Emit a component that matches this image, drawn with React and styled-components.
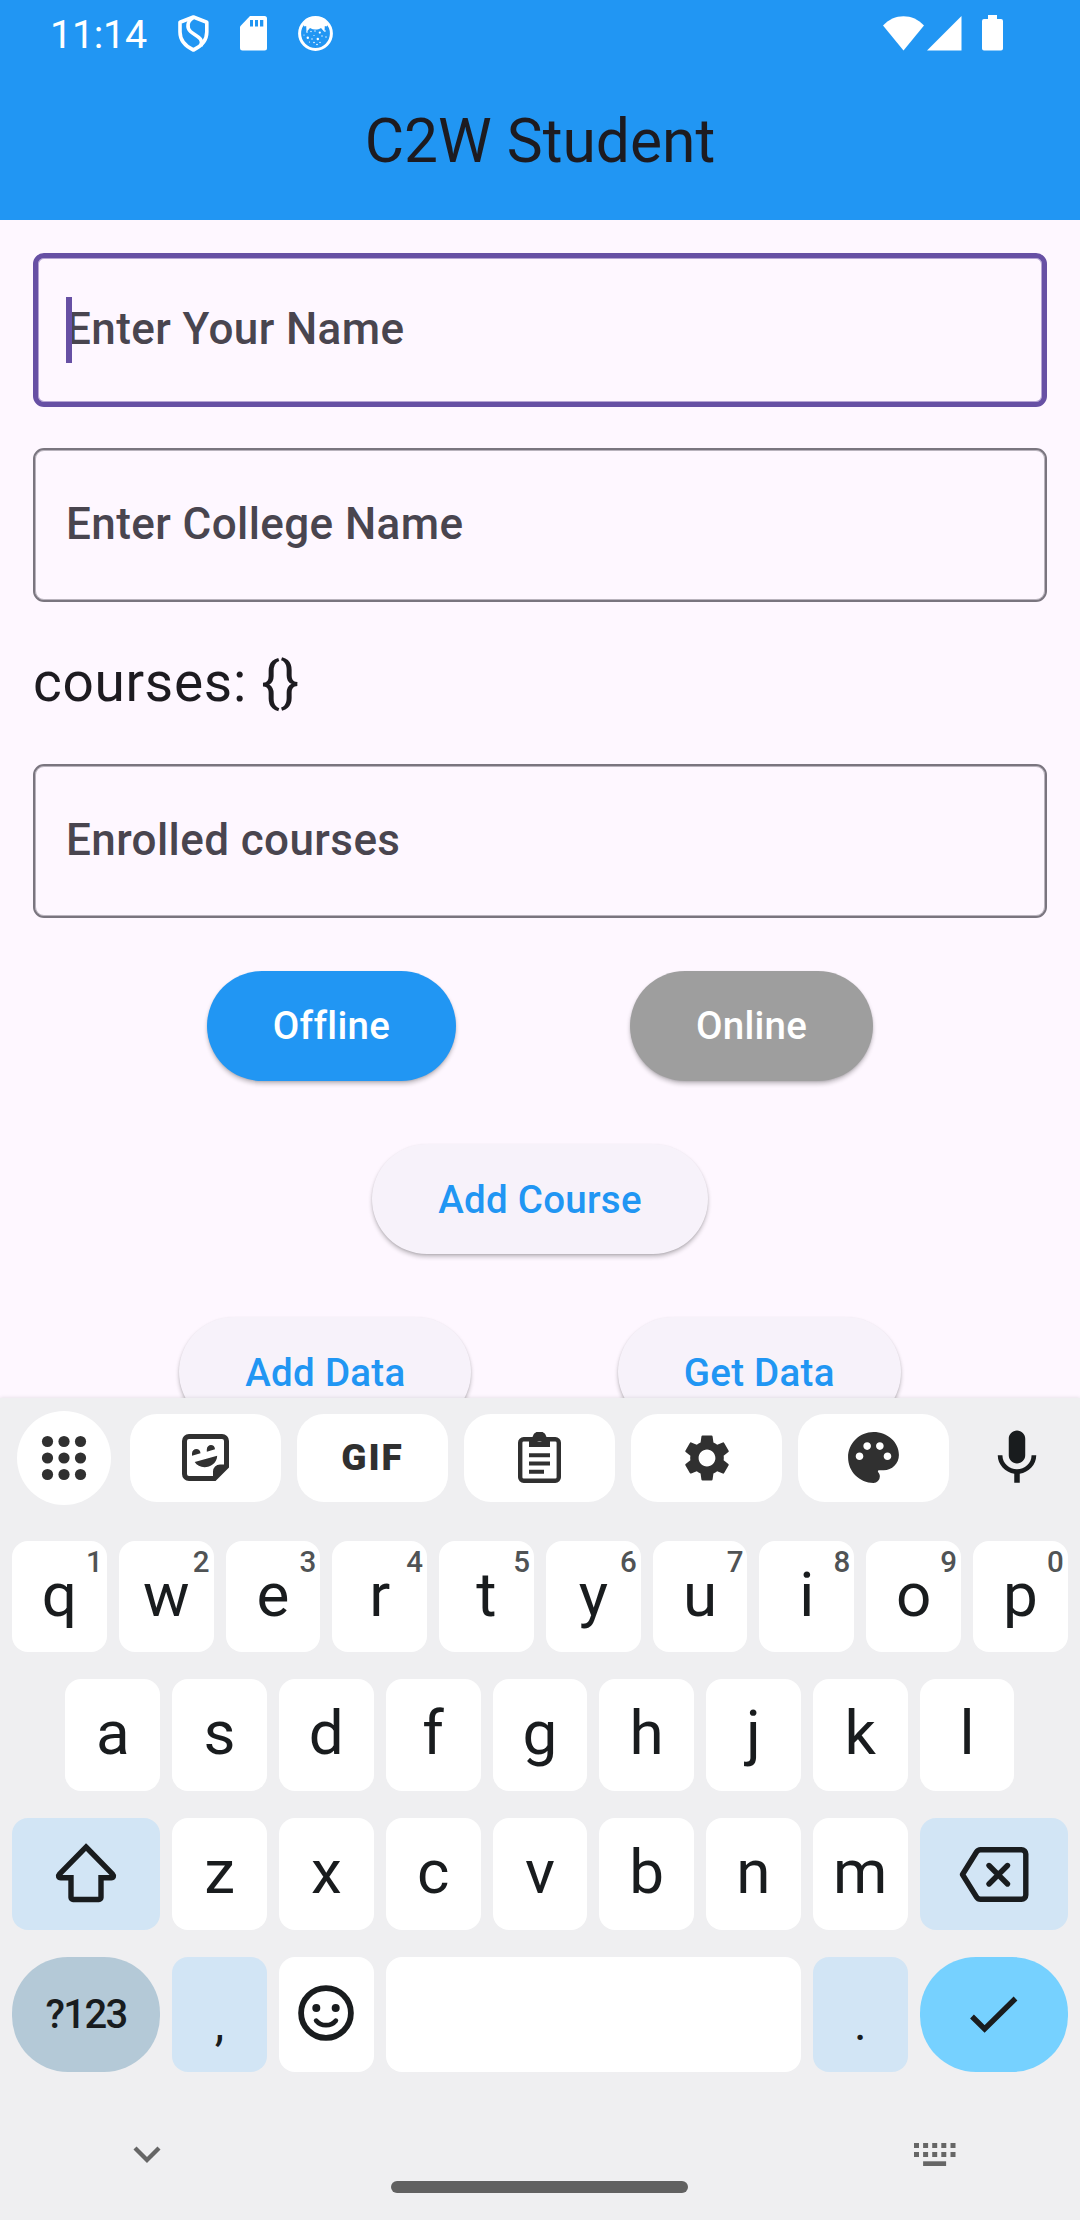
import React from "react";
import styled, { createGlobalStyle } from "styled-components";
import { MdSettings, MdPalette, MdMic } from "react-icons/md";

const GlobalStyle = createGlobalStyle`
  *, *::before, *::after { box-sizing: border-box; }
  body { margin: 0; background: #fef7ff; }
  svg { display: block; flex: none; }
`;

const Screen = styled.div`
  width: 1080px;
  height: 2220px;
  display: flex;
  flex-direction: column;
  overflow: hidden;
  background: #fef7ff;
  font-family: Roboto, "Liberation Sans", sans-serif;
`;

const Header = styled.header`
  flex: none;
  height: 220px;
  background: #2196f3;
`;

const StatusBar = styled.div`
  height: 66px;
  display: flex;
  justify-content: space-between;
  align-items: center;
  padding: 0 77px 0 50px;
  color: #fff;
`;

const StatusGroup = styled.div`
  display: flex;
  align-items: center;
  gap: ${(p) => p.$gap}px;
`;

const Clock = styled.span`
  width: 97px;
  font-size: 39.5px;
  letter-spacing: -0.3px;
  line-height: 66px;
  padding-top: 3px;
`;

const Title = styled.h1`
  margin: 0;
  height: 154px;
  line-height: 152px;
  font-size: 60.5px;
  font-weight: 400;
  text-align: center;
  color: #1d1b20;
`;

const Form = styled.main`
  flex: none;
  height: 1177.5px;
  padding: 33px 33px 0;
  overflow: hidden;
`;

const Field = styled.div`
  height: 154px;
  display: flex;
  align-items: center;
  padding: 0 ${(p) => (p.$focused ? 28 : 31)}px 3px;
  border: ${(p) => (p.$focused ? "5px solid #6750a4" : "2px solid #7a757f")};
  box-shadow: inset 0 0 0 1px ${(p) => (p.$focused ? "#b5a4d3" : "#b9b3bd")};
  border-radius: 11px;
  margin-bottom: ${(p) => p.$after ?? 0}px;
  color: #49454f;
  font-size: 44px;
  font-weight: 500;
  letter-spacing: 0.41px;
`;

const Label = styled.span`
  position: relative;
  white-space: nowrap;
`;

const Caret = styled.i`
  position: absolute;
  left: 0;
  top: -6px;
  width: 5.5px;
  height: 66px;
  background: #6750a4;
`;

const Courses = styled.p`
  margin: 0;
  height: 162px;
  line-height: 160px;
  font-size: 55px;
  letter-spacing: 0.69px;
  color: #1d1b20;
`;

const ButtonRow = styled.div`
  display: flex;
  justify-content: space-evenly;
  margin-top: ${(p) => p.$top}px;
`;

const Button = styled.button`
  height: 110px;
  padding: 0 66px;
  border: 0;
  border-radius: 55px;
  background: ${(p) => p.$bg ?? "#f7f2fa"};
  color: ${(p) => (p.$bg ? "#fff" : "#2196f3")};
  font: 500 38.5px Roboto, "Liberation Sans", sans-serif;
  letter-spacing: 0.275px;
  box-shadow: 0 3px 4px rgba(0, 0, 0, 0.22), 0 1px 2px rgba(0, 0, 0, 0.1);
`;

const Keyboard = styled.section`
  position: relative;
  flex: 1;
  display: flex;
  flex-direction: column;
  background: #efeff1;
  color: #191c1e;
  box-shadow: 0 0 4px rgba(0, 0, 0, 0.12);
`;

const Toolbar = styled.div`
  display: flex;
  align-items: center;
  height: 94px;
  margin-top: 13.5px;
  padding-left: 17px;
  color: #303030;
`;

const AppsButton = styled.div`
  width: 94px;
  height: 94px;
  display: grid;
  place-items: center;
  margin-right: 19px;
  border-radius: 50%;
  background: #fff;
`;

const Chip = styled.div`
  width: 151px;
  height: 88px;
  display: grid;
  place-items: center;
  margin-right: 16px;
  padding-bottom: 1px;
  border-radius: 27px;
  background: #fff;
`;

const Gif = styled.span`
  font-size: 37px;
  font-weight: 900;
  letter-spacing: 2px;
  line-height: 1;
`;

const MicButton = styled.div`
  margin-left: 18.5px;
  color: #191c1e;
`;

const Keys = styled.div`
  display: flex;
  flex-direction: column;
  gap: 27px;
  margin-top: 36px;
  padding: 0 12px;
`;

const KeyRow = styled.div`
  display: grid;
  grid-template-columns: repeat(20, 41.4px);
  column-gap: 12px;
  height: ${(p) => p.$height}px;
  padding: 0 ${(p) => (p.$inset ? 53.4 : 0)}px;
`;

const keyColours = { plain: "#fff", soft: "#d2e5f5", mode: "#b4c9d7", done: "#76d1ff" };

const Key = styled.div`
  position: relative;
  grid-column: span ${(p) => p.$span ?? 2};
  display: flex;
  align-items: center;
  justify-content: center;
  padding-bottom: ${(p) => p.$lift ?? 3}px;
  border-radius: ${(p) => (p.$round ? 56 : 16)}px;
  background: ${(p) => keyColours[p.$tone ?? "plain"]};
  font-size: 62px;
  line-height: 1.17;
`;

const Hint = styled.sup`
  position: absolute;
  top: 4px;
  right: 4px;
  font-size: 29.5px;
  font-weight: 500;
  line-height: 34px;
  color: #505355;
`;

const ModeText = styled.span`
  font-size: 40px;
  font-weight: 500;
  letter-spacing: -1.6px;
  padding-top: 4px;
`;

const Punctuation = styled.span`
  font-size: 48px;
  padding-top: 22px;
`;

const NavBar = styled.div`
  flex: 1;
  display: grid;
  grid-template-columns: 391px 297px 1fr;
  color: #666;
`;

const NavCell = styled.div`
  padding: ${(p) => p.$pad};
`;

const HomePill = styled.div`
  align-self: start;
  height: 12px;
  margin-top: 109px;
  border-radius: 6px;
  background: #616161;
`;

const ShieldIcon = () => (
  <svg width="31" height="37" viewBox="0 0 31 37" fill="none" stroke="currentColor" strokeWidth="3.6">
    <path d="M15.4 2 28.8 7.2V17c0 8-5 14-13.4 18C7 31 2 25 2 17V7.2Z" strokeLinejoin="round" />
    <path d="M15 3c-6 3-6.300 10-2.500 13.500 5 4.500 13.500 6 10.500 14.500" />
  </svg>
);

const SdCardIcon = () => (
  <svg width="27" height="35" viewBox="0 0 27 35">
    <path fill="currentColor" d="M10 0h14.500a2.500 2.500 0 0 1 2.500 2.500v29.500a2.500 2.500 0 0 1-2.500 2.500H2.500A2.500 2.500 0 0 1 0 32V10.500Z" />
    <path fill="#2196f3" d="M10 4h3v6.500h-3zM15 4h3v6.500h-3zM20 4h3.300v6.500H20z" />
  </svg>
);

const speckles = [
  [9, 16, 0.8], [13, 15.5, 0.7], [17, 15, 0.7], [21.8, 16.6, 1.1], [27, 15, 0.8],
  [6, 19, 0.6], [9.8, 21.7, 1.2], [14, 23, 0.7], [19.8, 23, 1.2], [24, 20, 0.7],
  [28, 21, 0.7], [11.5, 26, 0.6], [16, 26.5, 0.8], [22, 26.5, 0.7], [19, 28.5, 0.8], [16, 19.5, 0.6],
];

const CatIcon = () => (
  <svg width="35" height="35" viewBox="0 0 35 35">
    <circle cx="17.500" cy="17.500" r="15.900" fill="none" stroke="currentColor" strokeWidth="3" />
    <path fill="currentColor" d="M5 8.500C9 3 13 1.500 17.500 1.500S26 3 30 8.500l-1.500 2-1.700-.5-.3 6-3.500-4c-3.500 2-7.500 2-11 0l-3.500 4-.3-6-1.700.5Z" />
    {speckles.map(([x, y, r]) => (
      <circle key={`${x}-${y}`} cx={x} cy={y} r={r} fill="currentColor" />
    ))}
  </svg>
);

const WifiIcon = () => (
  <svg width="41" height="35" viewBox="0 0 41 35">
    <path fill="currentColor" d="M0 9.500C11-3 30-3 41 9.500L20.500 34.500Z" />
  </svg>
);

const SignalIcon = () => (
  <svg width="35" height="35" viewBox="0 0 35 35">
    <path fill="currentColor" d="M34.500 0V34.500H0Z" />
  </svg>
);

const BatteryIcon = () => (
  <svg width="21" height="36" viewBox="0 0 21 36">
    <path fill="currentColor" d="M6 0h9v4h4a2 2 0 0 1 2 2v27.500a2 2 0 0 1-2 2H2a2 2 0 0 1-2-2V6a2 2 0 0 1 2-2h4Z" />
  </svg>
);

const AppsIcon = () => (
  <svg width="46" height="46" viewBox="0 0 46 46" fill="currentColor">
    {[6.5, 23, 39.5].flatMap((y) => [6.5, 23, 39.5].map((x) => <circle key={`${x}-${y}`} cx={x} cy={y} r="5.6" />))}
  </svg>
);

const StickerIcon = () => (
  <svg width="47" height="47" viewBox="0 0 47 47">
    <path
      fill="none"
      stroke="currentColor"
      strokeWidth="5"
      d="M32.500 44.500H7a4.500 4.500 0 0 1-4.500-4.500V7A4.500 4.500 0 0 1 7 2.500h33a4.500 4.500 0 0 1 4.500 4.500v25.500Z"
    />
    <path
      fill="currentColor"
      d="M31 45v-7.500a7 7 0 0 1 7-7h7v2.500L33 45ZM10 21.700v-2.200c0-6 8.500-6 8.500-.3ZM24.800 17.700v-2.200c0-6 8.200-6 8.200-.3ZM12.700 28 35.200 21.700c-.7 12.500-17.500 15-22.500 6.300Z"
    />
  </svg>
);

const ClipboardIcon = () => (
  <svg width="43" height="51" viewBox="0 0 43 51">
    <rect x="2.200" y="7.200" width="38.600" height="41.600" rx="3.500" fill="none" stroke="currentColor" strokeWidth="4.400" />
    <path
      fill="currentColor"
      fillRule="evenodd"
      d="M11 5h3.500a7.200 7.200 0 0 1 14 0H32v10H11ZM21.500 5a2.500 2.500 0 1 0 0 5 2.500 2.500 0 0 0 0-5ZM11 21.300h21v4H11zM11 29.500h21v4H11zM11 37.700h15v4H11z"
    />
  </svg>
);

const ShiftIcon = () => (
  <svg width="62" height="60" viewBox="0 0 62 60" fill="none" stroke="currentColor" strokeWidth="5.400">
    <path d="M31 4 57.500 31c1.800 2 1 3.800-1.300 3.800H46V54.500a2 2 0 0 1-2 2H18a2 2 0 0 1-2-2V34.800H5.800C3.500 34.800 2.700 33 4.500 31Z" />
  </svg>
);

const BackspaceIcon = () => (
  <svg width="70" height="55" viewBox="0 0 70 55" fill="none" stroke="currentColor" strokeWidth="5.400" strokeLinejoin="round" strokeLinecap="round">
    <path d="M3.500 27.500 17.500 5q1.500-2.300 4-2.300H62.500A4.300 4.300 0 0 1 66.800 7V48a4.300 4.300 0 0 1-4.300 4.300H21.500q-2.500 0-4-2.300Z" />
    <path d="m30 18.500 18.500 18.500M48.500 18.500 30 37" />
  </svg>
);

const SmileIcon = () => (
  <svg width="56" height="56" viewBox="0 0 56 56">
    <circle cx="28" cy="28" r="24.900" fill="none" stroke="currentColor" strokeWidth="5.800" />
    <circle cx="18.300" cy="23" r="4" fill="currentColor" />
    <circle cx="37.700" cy="23" r="4" fill="currentColor" />
    <path d="M18.200 35.700c5 6 14.600 6 19.600 0" fill="none" stroke="currentColor" strokeWidth="4.800" strokeLinecap="round" />
  </svg>
);

const CheckIcon = () => (
  <svg width="48" height="38" viewBox="0 0 48 38" fill="none" stroke="currentColor" strokeWidth="5.400">
    <path d="M2 20.500 14.600 33 45.500 2.500" />
  </svg>
);

const ChevronIcon = () => (
  <svg width="28" height="18" viewBox="0 0 28 18" fill="none" stroke="currentColor" strokeWidth="4.300">
    <path d="M2 2 14 14 26 2" />
  </svg>
);

const KeyboardIcon = () => (
  <svg width="42" height="24" viewBox="0 0 42 24" fill="currentColor">
    {[0, 9].flatMap((y) => [0, 9.1, 18.2, 27.3, 36.5].map((x) => <rect key={`${x}-${y}`} x={x} y={y} width="5" height="5" />))}
    <rect x="9.100" y="18.300" width="23" height="4.700" />
  </svg>
);

const LetterKeys = ({ letters, hints = "" }) =>
  [...letters].map((letter, i) => (
    <Key key={letter}>
      {letter}
      {hints[i] && <Hint>{hints[i]}</Hint>}
    </Key>
  ));

export default function App() {
  return (
    <Screen>
      <GlobalStyle />
      <Header>
        <StatusBar>
          <StatusGroup $gap={31}>
            <Clock>11:14</Clock>
            <ShieldIcon />
            <SdCardIcon />
            <CatIcon />
          </StatusGroup>
          <StatusGroup $gap={20}>
            <StatusGroup $gap={3}>
              <WifiIcon />
              <SignalIcon />
            </StatusGroup>
            <BatteryIcon />
          </StatusGroup>
        </StatusBar>
        <Title>C2W Student</Title>
      </Header>

      <Form>
        <Field $focused $after={41.25}>
          <Label>
            Enter Your Name
            <Caret />
          </Label>
        </Field>
        <Field>
          <Label>Enter College Name</Label>
        </Field>
        <Courses>courses: {"{}"}</Courses>
        <Field>
          <Label>Enrolled courses</Label>
        </Field>
        <ButtonRow $top={52.5}>
          <Button $bg="#2196f3">Offline</Button>
          <Button $bg="#9e9e9e">Online</Button>
        </ButtonRow>
        <ButtonRow $top={63.25}>
          <Button>Add Course</Button>
        </ButtonRow>
        <ButtonRow $top={63.25}>
          <Button>Add Data</Button>
          <Button>Get Data</Button>
        </ButtonRow>
      </Form>

      <Keyboard>
        <Toolbar>
          <AppsButton>
            <AppsIcon />
          </AppsButton>
          <Chip>
            <StickerIcon />
          </Chip>
          <Chip>
            <Gif>GIF</Gif>
          </Chip>
          <Chip>
            <ClipboardIcon />
          </Chip>
          <Chip>
            <MdSettings size={56} />
          </Chip>
          <Chip>
            <MdPalette size={61} />
          </Chip>
          <MicButton>
            <MdMic size={66} />
          </MicButton>
        </Toolbar>
        <Keys>
          <KeyRow $height={111}>
            <LetterKeys letters="qwertyuiop" hints="1234567890" />
          </KeyRow>
          <KeyRow $height={112} $inset>
            <LetterKeys letters="asdfghjkl" />
          </KeyRow>
          <KeyRow $height={112}>
            <Key $span={3} $tone="soft">
              <ShiftIcon />
            </Key>
            <LetterKeys letters="zxcvbnm" />
            <Key $span={3} $tone="soft" $lift={0}>
              <BackspaceIcon />
            </Key>
          </KeyRow>
          <KeyRow $height={115}>
            <Key $span={3} $tone="mode" $round>
              <ModeText>?123</ModeText>
            </Key>
            <Key $tone="soft">
              <Punctuation>,</Punctuation>
            </Key>
            <Key>
              <SmileIcon />
            </Key>
            <Key $span={8} />
            <Key $tone="soft">
              <Punctuation>.</Punctuation>
            </Key>
            <Key $span={3} $tone="done" $round $lift={0}>
              <CheckIcon />
            </Key>
          </KeyRow>
        </Keys>
        <NavBar>
          <NavCell $pad="74px 0 0 133px">
            <ChevronIcon />
          </NavCell>
          <HomePill />
          <NavCell $pad="71px 0 0 226px">
            <KeyboardIcon />
          </NavCell>
        </NavBar>
      </Keyboard>
    </Screen>
  );
}
